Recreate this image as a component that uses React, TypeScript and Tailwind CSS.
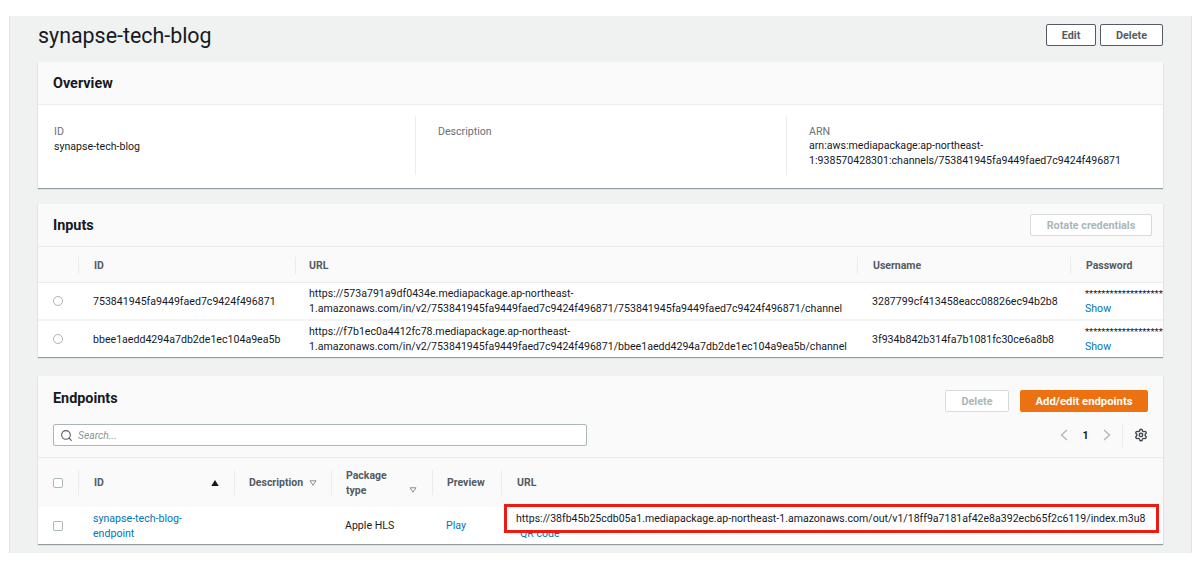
import { Search, Settings } from "lucide-react";

const inputs = [
  {
    id: "753841945fa9449faed7c9424f496871",
    url: "https://573a791a9df0434e.mediapackage.ap-northeast-1.amazonaws.com/in/v2/753841945fa9449faed7c9424f496871/753841945fa9449faed7c9424f496871/channel",
    username: "3287799cf413458eacc08826ec94b2b8",
  },
  {
    id: "bbee1aedd4294a7db2de1ec104a9ea5b",
    url: "https://f7b1ec0a4412fc78.mediapackage.ap-northeast-1.amazonaws.com/in/v2/753841945fa9449faed7c9424f496871/bbee1aedd4294a7db2de1ec104a9ea5b/channel",
    username: "3f934b842b314fa7b1081fc30ce6a8b8",
  },
];

function Sep({ short }: { short?: boolean }) {
  return <div className={short ? "w-px h-[17px] bg-[#eaeded] shrink-0" : "w-px h-[25px] bg-[#eaeded] shrink-0"} />;
}

function Checkbox() {
  return <div className="w-[10px] h-[10px] rounded-[2px] border border-[#aab7b8] bg-white" />;
}

function Caret({ className }: { className: string }) {
  return (
    <svg viewBox="0 0 10 8" className={className}>
      <path d="M1 1h8L5 7z" fill="none" stroke="#687078" strokeWidth="1" />
    </svg>
  );
}

export default function App() {
  return (
    <div className="w-[1200px] h-[563px] bg-white overflow-hidden text-[10.6px] leading-[15px] text-[#16191f] font-['Roboto','Liberation_Sans',sans-serif]">
      <div className="ml-[9px] mr-[8px] mt-[16px] h-[537px] bg-[#f0f2f2] border-l border-r border-[#e0e4e4] pl-[28px] pr-[28px] overflow-hidden">
        <div className="flex items-start justify-between h-[46px] pt-[8px]">
          <div className="text-[21.4px] leading-[24px] text-[#16191f]">synapse-tech-blog</div>
          <div className="flex gap-[4px]">
            <button className="w-[50px] h-[22px] bg-white border border-[#545b64] rounded-[2px] text-[10.8px] font-bold text-[#545b64]">Edit</button>
            <button className="w-[63px] h-[22px] bg-white border border-[#545b64] rounded-[2px] text-[10.8px] font-bold text-[#545b64]">Delete</button>
          </div>
        </div>

        <section className="bg-white shadow-[0_1px_1px_0_rgba(0,28,36,0.4)] h-[126px]">
          <div className="h-[43px] bg-[#fafafa] border-b border-[#eaeded] flex items-center px-[15px] text-[14.4px] font-bold">Overview</div>
          <div className="grid grid-cols-[377px_371px_1fr] pt-[11px]">
            <div className="h-[59px] pl-[16px] pt-[8px]">
              <div className="text-[#687078]">ID</div>
              <div>synapse-tech-blog</div>
            </div>
            <div className="h-[59px] border-l border-[#eaeded] pl-[22px] pt-[8px]">
              <div className="text-[#687078]">Description</div>
            </div>
            <div className="h-[59px] border-l border-[#eaeded] pl-[22px] pt-[8px]">
              <div className="text-[#687078]">ARN</div>
              <div className="leading-[14.5px]">arn:aws:mediapackage:ap-northeast-<br />1:938570428301:channels/753841945fa9449faed7c9424f496871</div>
            </div>
          </div>
        </section>

        <section className="mt-[16px] bg-white shadow-[0_1px_1px_0_rgba(0,28,36,0.4)] h-[153px] overflow-hidden">
          <div className="h-[43px] bg-[#fafafa] border-b border-[#eaeded] flex items-center justify-between pl-[15px] pr-[11px]">
            <div className="text-[14.4px] font-bold">Inputs</div>
            <button className="w-[122px] h-[22px] bg-white border border-[#d5dbdb] rounded-[2px] text-[10.8px] font-bold text-[#aab7b8]">Rotate credentials</button>
          </div>
          <div className="h-[36px] pt-[1px] bg-[#fafafa] border-b border-[#eaeded] flex items-center text-[#545b64] font-bold text-[10.5px]">
            <div className="w-[41px] flex justify-end shrink-0"><Sep short /></div>
            <div className="w-[216px] pl-[15px] shrink-0">ID</div>
            <Sep short />
            <div className="w-[561px] pl-[13px] shrink-0">URL</div>
            <Sep short />
            <div className="w-[212px] pl-[15px] shrink-0">Username</div>
            <Sep short />
            <div className="pl-[15px]">Password</div>
          </div>
          <div className="divide-y-[2px] divide-[#f2f3f3]">
            {inputs.map((row) => (
              <div key={row.id} className="py-[3px] flex items-center whitespace-nowrap">
                <div className="w-[40px] pl-[15px] shrink-0">
                  <div className="w-[10px] h-[10px] rounded-full border border-[#aab7b8]" />
                </div>
                <div className="w-[217px] pl-[15px] shrink-0">{row.id}</div>
                <div className="w-[563px] pl-[14px] shrink-0 whitespace-normal">{row.url}</div>
                <div className="w-[213px] pl-[14px] shrink-0">{row.username}</div>
                <div className="pl-[14px] overflow-hidden min-w-0 flex-1">
                  <div className="text-[9.5px]">******************************</div>
                  <div className="text-[#0073bb]">Show</div>
                </div>
              </div>
            ))}
          </div>
        </section>

        <section className="mt-[19px] bg-white shadow-[0_1px_1px_0_rgba(0,28,36,0.4)] h-[168px] overflow-hidden">
          <div className="h-[82px] bg-[#fafafa] border-b border-[#eaeded] px-[15px] pt-[14px]">
            <div className="flex justify-between items-start">
              <div className="text-[14.4px] leading-[16px] font-bold mt-[1px]">Endpoints</div>
              <div className="flex gap-[11px]">
                <button className="w-[64px] h-[22px] bg-white border border-[#d5dbdb] rounded-[2px] text-[10.8px] font-bold text-[#aab7b8]">Delete</button>
                <button className="w-[128px] h-[22px] bg-[#ec7211] rounded-[2px] text-[11.3px] font-bold text-white">Add/edit endpoints</button>
              </div>
            </div>
            <div className="flex items-center justify-between mt-[11px]">
              <div className="w-[534px] h-[22px] bg-white border border-[#aab7b8] rounded-[2px] flex items-center pl-[6px] gap-[5px]">
                <Search className="w-[13px] h-[13px] text-[#545b64]" strokeWidth={2} />
                <span className="italic text-[#879596] text-[10.3px]">Search...</span>
              </div>
              <div className="flex items-center text-[#16191f]">
                <svg viewBox="0 0 8 12" className="w-[8px] h-[12px]"><path d="M7 1L1.5 6L7 11" fill="none" stroke="#aab7b8" strokeWidth="1.3" /></svg>
                <span className="w-[35px] text-center font-bold">1</span>
                <svg viewBox="0 0 8 12" className="w-[8px] h-[12px]"><path d="M1 1L6.5 6L1 11" fill="none" stroke="#aab7b8" strokeWidth="1.3" /></svg>
                <div className="w-px h-[24px] bg-[#eaeded] ml-[11px] mr-[11px]" />
                <Settings className="w-[14px] h-[14px] text-[#414750]" strokeWidth={2.4} />
              </div>
            </div>
          </div>
          <div className="h-[49px] bg-[#fafafa] flex items-center text-[#545b64] font-bold text-[10.5px]">
            <div className="w-[41px] pl-[15px] flex justify-between items-center shrink-0"><Checkbox /><Sep /></div>
            <div className="w-[155px] pl-[15px] pr-[15px] flex justify-between items-center shrink-0">
              <span>ID</span>
              <svg viewBox="0 0 10 8" className="w-[8px] h-[6px]"><path d="M5 0l5 8H0z" fill="#16191f" /></svg>
            </div>
            <Sep />
            <div className="w-[96px] pl-[14px] flex items-center gap-[6px] shrink-0"><span>Description</span><Caret className="w-[8px] h-[6px]" /></div>
            <Sep />
            <div className="w-[100px] pl-[14px] shrink-0 relative">
              <div>Package<br />type</div>
              <Caret className="absolute right-[15px] bottom-[5px] w-[8px] h-[6px]" />
            </div>
            <Sep />
            <div className="w-[68px] pl-[14px] shrink-0">Preview</div>
            <Sep />
            <div className="pl-[15px]">URL</div>
          </div>
          <div className="h-[37px] bg-white flex items-center whitespace-nowrap">
            <div className="w-[40px] pl-[15px] shrink-0"><Checkbox /></div>
            <div className="w-[253px] pl-[15px] shrink-0 text-[#0073bb]">synapse-tech-blog-<br />endpoint</div>
            <div className="w-[101px] pl-[14px] shrink-0">Apple HLS</div>
            <div className="w-[70px] pl-[14px] shrink-0 text-[#0073bb]">Play</div>
            <div className="relative flex-1 self-stretch">
              <div className="absolute left-[18px] top-[19px] text-[#0073bb]">QR code</div>
              <div className="absolute left-[2px] top-[-3px] w-[655px] h-[29px] border-[3px] border-[#f01a14] bg-white pl-[9px] flex items-center text-[10.55px] text-[#16191f]">
                https://38fb45b25cdb05a1.mediapackage.ap-northeast-1.amazonaws.com/out/v1/18ff9a7181af42e8a392ecb65f2c6119/index.m3u8
              </div>
            </div>
          </div>
        </section>
      </div>
    </div>
  );
}
